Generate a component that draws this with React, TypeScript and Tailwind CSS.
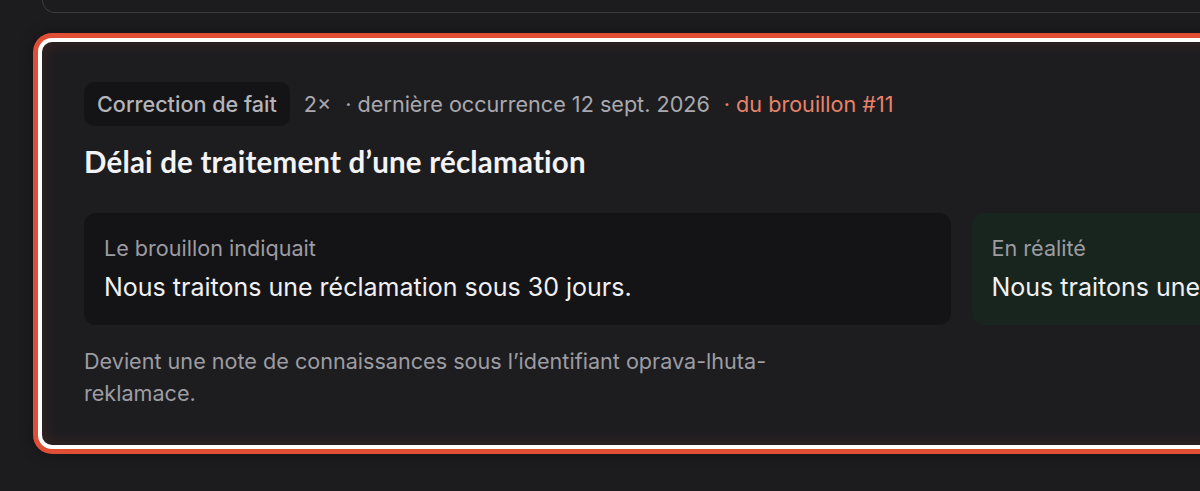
export default function App() {
  return (
    <div
      className="min-h-screen w-full overflow-hidden bg-[#1c1c1f] pl-[42px] pb-10"
      style={{ fontFamily: 'Inter, "Noto Sans", sans-serif' }}
    >
      {/* previous card, only its bottom edge shows */}
      <div className="h-[13px] w-[1838px] rounded-b-2xl border-x border-b border-[#3a3a3f]" />

      <div className="mt-[29px] w-[1838px] rounded-[10px] bg-[#1d1d20] px-[42px] pt-[40px] pb-[36px] shadow-[0_0_0_4px_#ffffff,0_0_0_9px_#e04e35,0_0_14px_9px_rgba(0,0,0,0.35),inset_0_0_18px_rgba(224,78,53,0.16)]">
        <div className="flex items-center gap-[14px] text-[21.6px] text-[#a9a9af]">
          <span className="rounded-[10px] bg-[#141416] px-[13px] py-[8px] font-medium leading-[28px] text-[#b4b4ba]">
            Correction de fait
          </span>
          <span>2×</span>
          <span>· dernière occurrence 12 sept. 2026</span>
          <span className="text-[#e8826a]">· du brouillon #11</span>
        </div>

        <h2
          className="mt-[19px] text-[29.5px] font-bold leading-[34px] tracking-[0.2px] text-[#f3f3f5]"
          style={{ fontFamily: 'Lato, "Noto Sans", sans-serif' }}
        >
          Délai de traitement d’une réclamation
        </h2>

        <div className="mt-[34px] grid grid-cols-2 gap-[21px]">
          <div className="rounded-xl bg-[#141416] px-5 pt-[21px] pb-[22px]">
            <div className="text-[21.6px] leading-[28px] text-[#9c9ca2]">Le brouillon indiquait</div>
            <div className="mt-[9px] text-[25px] leading-[32px] text-[#f1f1f3]">
              Nous traitons une réclamation sous 30 jours.
            </div>
          </div>
          <div className="rounded-xl bg-[#17251e] px-5 pt-[21px] pb-[22px]">
            <div className="text-[21.6px] leading-[28px] text-[#9c9ca2]">En réalité</div>
            <div className="mt-[9px] text-[25px] leading-[32px] text-[#f1f1f3]">
              Nous traitons une réclamation sous 45 jours.
            </div>
          </div>
        </div>

        <p className="mt-[20px] max-w-[720px] text-[21.6px] leading-[32px] text-[#9c9ca2]">
          Devient une note de connaissances sous l’identifiant oprava-lhuta-reklamace.
        </p>
      </div>
    </div>
  );
}
